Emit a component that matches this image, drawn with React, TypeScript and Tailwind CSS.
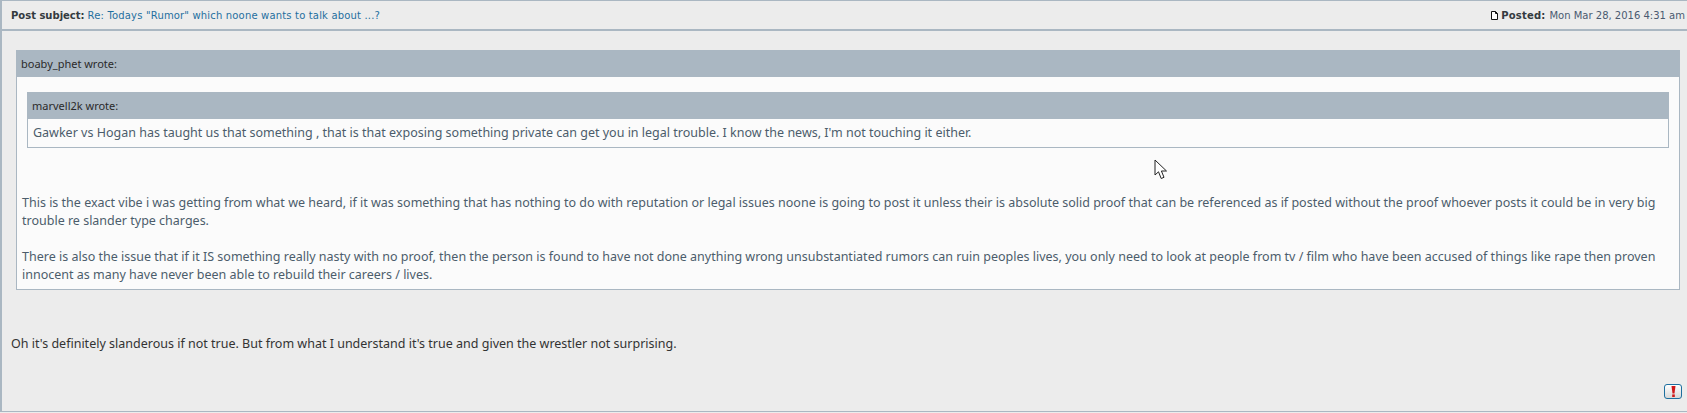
function PostedIcon() {
  return (
    <svg width="7" height="9" viewBox="0 0 7 9" className="mr-[-1px] shrink-0">
      <path d="M0.5 0.5H4.5L6.5 2.5V8.5H0.5Z" fill="#fff" stroke="#111" strokeWidth="1" />
      <path d="M4.5 0.5V2.5H6.5" fill="none" stroke="#111" strokeWidth="1" />
    </svg>
  );
}

function ReportButton() {
  return (
    <div className="flex h-[15px] w-[18px] items-center justify-center rounded-[3px] border border-[#1d6f9f] bg-gradient-to-b from-white to-[#d8d8d8]">
      <svg width="5" height="11" viewBox="0 0 5 11">
        <path d="M0.5 0H4.5L3.5 7.5H1.5Z" fill="#d01818" />
        <rect x="1.2" y="8.4" width="2.6" height="2.6" fill="#d01818" />
      </svg>
    </div>
  );
}

function Cursor() {
  return (
    <svg width="14" height="21" viewBox="0 0 14 21" className="absolute left-[1154px] top-[159px]">
      <path
        d="M1 1V16L4.5 12.8L7.2 19.5L10 18.3L7.4 12H12.5Z"
        fill="#fff"
        stroke="#222"
        strokeWidth="1"
      />
    </svg>
  );
}

function QuoteHead({ children }: { children: string }) {
  return (
    <div className="flex h-[26px] items-center bg-[#aab7c2] pl-[4px] text-[11px] text-[#2a2a2a]">
      {children}
    </div>
  );
}

export default function App() {
  return (
    <div
      className="relative h-[413px] w-[1687px] overflow-hidden bg-[#ececec] text-[12.5px]"
      style={{ fontFamily: '"Noto Sans", Tahoma, sans-serif' }}
    >
      <div className="flex h-[412px] flex-col border-y border-l-2 border-[#aab7c2]">
        <div className="flex h-[30px] shrink-0 items-center justify-between border-b-2 border-[#aab7c2] pl-[9px] pr-[2px] text-[10px]" style={{ fontFamily: '"DejaVu Sans", Verdana, sans-serif' }}>
          <div className="flex gap-[3px]">
            <b className="text-[#333a40]">Post subject:</b>
            <span className="tracking-[0.17px] text-[#1f6f9f]">Re: Todays "Rumor" which noone wants to talk about ...?</span>
          </div>
          <div className="flex items-center gap-[4px]">
            <PostedIcon />
            <b className="tracking-[0.2px] text-[#333a40]">Posted:</b>
            <span className="text-[#4a5a70]">Mon Mar 28, 2016 4:31 am</span>
          </div>
        </div>

        <div className="flex-1 pl-[14px] pr-[7px] pt-[19px]">
          <div className="h-[240px] border border-[#aab7c2] bg-[#fbfbfb]">
            <QuoteHead>boaby_phet wrote:</QuoteHead>
            <div className="mx-[10px] mt-[15px] border border-[#aab7c2]">
              <QuoteHead>marvell2k wrote:</QuoteHead>
              <div className="flex h-[28px] items-center pl-[5px] text-[#4c5d6b]">
                Gawker vs Hogan has taught us that something , that is that exposing something private can get you in legal trouble. I know the news, I'm not touching it either.
              </div>
            </div>
            <div className="mt-[46px] px-[5px] leading-[18px] text-[#4c5d6b]">
              <p>
                This is the exact vibe i was getting from what we heard, if it was something that has nothing to do with reputation or legal issues noone is going to post it unless their is absolute solid proof that can be referenced as if posted without the proof whoever posts it could be in very big trouble re slander type charges.
              </p>
              <p className="mt-[18px]">
                There is also the issue that if it IS something really nasty with no proof, then the person is found to have not done anything wrong unsubstantiated rumors can ruin peoples lives, you only need to look at people from tv / film who have been accused of things like rape then proven innocent as many have never been able to rebuild their careers / lives.
              </p>
            </div>
          </div>
          <p className="-ml-[5px] mt-[45px] leading-[18px] text-[#333]">
            Oh it's definitely slanderous if not true. But from what I understand it's true and given the wrestler not surprising.
          </p>
          <div className="-mr-[2px] mt-[31px] flex justify-end">
            <ReportButton />
          </div>
        </div>
      </div>
      <Cursor />
    </div>
  );
}
